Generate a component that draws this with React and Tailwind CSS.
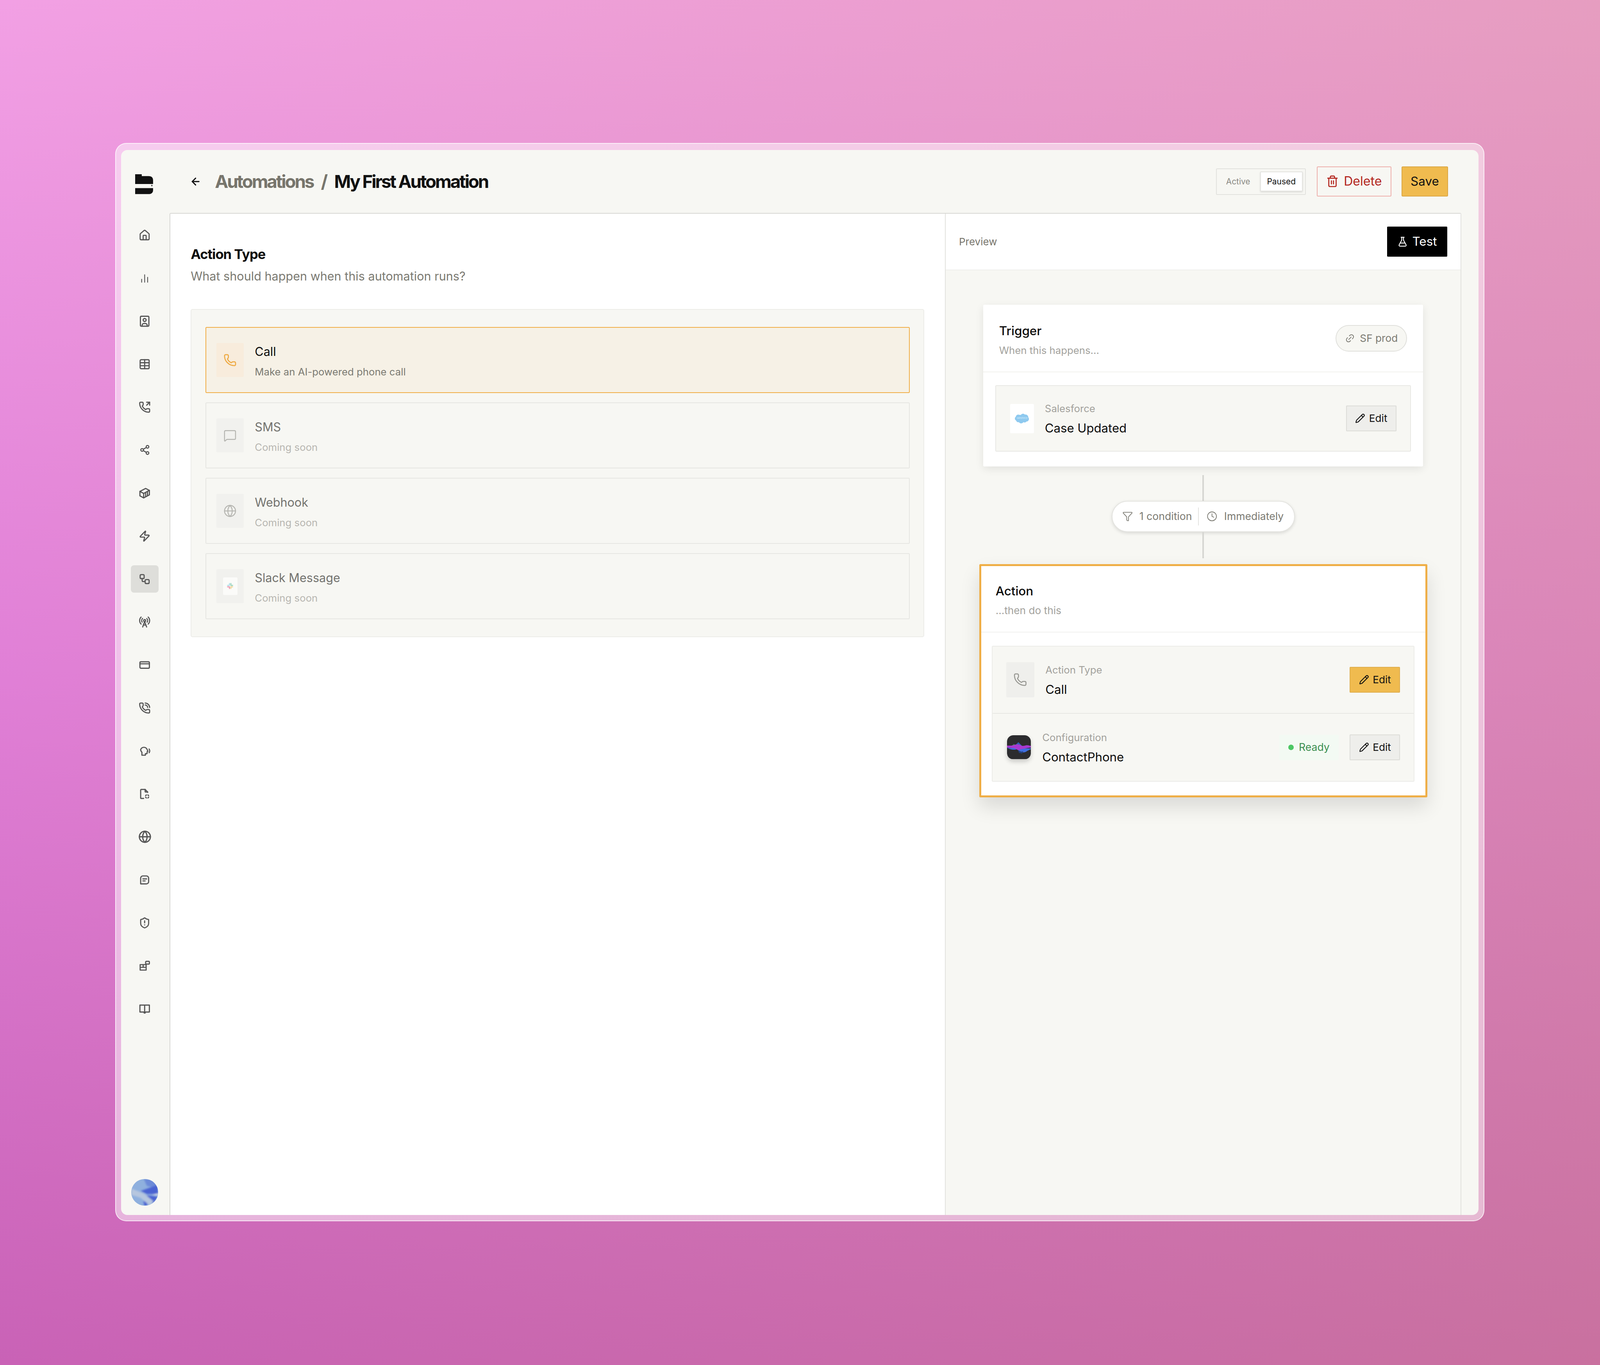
import {
  ArrowLeft,
  Clock,
  FlaskConical,
  Funnel,
  Globe,
  House,
  Link2,
  MessageSquare,
  Pencil,
  Phone,
  PhoneCall,
  PhoneOutgoing,
  RadioTower,
  Share2,
  ShieldAlert,
  Trash2,
  Workflow,
  Zap,
} from "lucide-react";

// the window is narrower than the screenshot, so widths are in vw and heights stay in px
const navIcon = "h-[0.747vw] w-[0.747vw]";

function Svg({ sw = 2.3, children }) {
  return (
    <svg
      className={navIcon}
      viewBox="0 0 24 24"
      fill="none"
      stroke="currentColor"
      strokeWidth={sw}
      strokeLinecap="round"
      strokeLinejoin="round"
    >
      {children}
    </svg>
  );
}

const BarsIcon = () => (
  <Svg sw={1.7}>
    <path d="M6 20v-6M12 20V5M18 20V10" />
  </Svg>
);
const ContactIcon = () => (
  <Svg>
    <rect x="3.5" y="2" width="17" height="20" rx="2" />
    <circle cx="12" cy="9.5" r="3" />
    <path d="M7 22v-2a3.5 3.5 0 0 1 3.5-3.5h3A3.5 3.5 0 0 1 17 20v2" />
  </Svg>
);
const TableIcon = () => (
  <Svg>
    <rect x="3" y="3" width="18" height="18" rx="2" />
    <path d="M3 9h18M3 15h18M12 3v18" />
  </Svg>
);
const CubeIcon = () => (
  <Svg>
    <path d="M2.5 8.5 14 2.5l7.5 4v9L10 21.5l-7.5-4z" />
    <path d="M2.5 8.5 10 12.5l11.5-6M10 12.5v9M14 10.5v8.5M17.7 8.5v8.5" />
  </Svg>
);
const CardIcon = () => (
  <Svg>
    <rect x="2.5" y="5.5" width="19" height="13" rx="2" />
    <path d="M2.5 9.5h19" />
  </Svg>
);
const SpeechIcon = () => (
  <Svg>
    <path d="M13.5 20.5v-3h2a1.5 1.5 0 0 0 1.5-1.5v-2.5l1.5-1-1.5-3.5A7 7 0 0 0 4 9c0 2.5 1 4 2.5 5.5v6z" />
    <path d="M21 8a7 7 0 0 1 0 7.5" />
  </Svg>
);
const FileDashedIcon = () => (
  <Svg>
    <path d="M10 21H5a1 1 0 0 1-1-1V4a1 1 0 0 1 1-1h8l5 5v1" />
    <path d="M13 3v4a1 1 0 0 0 1 1h4" />
    <path d="M14 15.5a3 3 0 0 1 1.5-1.5M18.5 14a3 3 0 0 1 1.5 1.5M20 18.5a3 3 0 0 1-1.5 1.5M15.5 20a3 3 0 0 1-1.5-1.5" />
  </Svg>
);
const NoteIcon = () => (
  <Svg>
    <path d="M4 8.5A4.5 4.5 0 0 1 8.5 4h7A4.5 4.5 0 0 1 20 8.5v7a4.5 4.5 0 0 1-4.5 4.5H4z" />
    <path d="M8.5 10h7.5M8.5 14h4.5" />
  </Svg>
);
const BlocksIcon = () => (
  <Svg>
    <path d="M3 9.5h12v11H3zM3 15h12M9 9.5V15" />
    <rect x="14" y="3" width="7.5" height="5.5" rx="1.5" />
  </Svg>
);
const BookIcon = () => (
  <Svg>
    <path d="M2.5 4.5h19v14H13v2h-2v-2H2.5zM12 4.5v14" />
  </Svg>
);

const navItems = [
  <House className={navIcon} strokeWidth={2.2} />,
  <BarsIcon />,
  <ContactIcon />,
  <TableIcon />,
  <PhoneOutgoing className={navIcon} strokeWidth={2.2} />,
  <Share2 className="h-[0.67vw] w-[0.67vw]" strokeWidth={2.3} />,
  <CubeIcon />,
  <Zap className={navIcon} strokeWidth={2.2} />,
  <Workflow className={navIcon} strokeWidth={2.2} />,
  <RadioTower className={navIcon} strokeWidth={2.2} />,
  <CardIcon />,
  <PhoneCall className={navIcon} strokeWidth={2.2} />,
  <SpeechIcon />,
  <FileDashedIcon />,
  <Globe className="h-[0.826vw] w-[0.826vw]" strokeWidth={2.2} />,
  <NoteIcon />,
  <ShieldAlert className={navIcon} strokeWidth={2.2} />,
  <BlocksIcon />,
  <BookIcon />,
];

function Logo() {
  return (
    <svg viewBox="0 0 57 63" className="mr-[0.1vw] h-auto w-[1.12vw]">
      <path d="M0 0h21v6h22c9 0 14 5 14 13v12H0z" fill="#111" />
      <path d="M0 44h57v7c0 7-5 12-12 12H0z" fill="#111" />
      <circle cx="53" cy="36" r="2.5" fill="#555" />
    </svg>
  );
}

function Avatar() {
  return (
    <svg viewBox="0 0 85 85" className="h-[1.67vw] w-[1.67vw] rounded-full">
      <defs>
        <filter id="soft">
          <feGaussianBlur stdDeviation="2.5" />
        </filter>
      </defs>
      <rect width="85" height="85" fill="#8fb0de" />
      <g filter="url(#soft)">
        <path d="M40 0h45v30L50 22z" fill="#6c8ad8" />
        <path d="M30 38 85 18v30H50z" fill="#4a62d2" />
        <path d="M50 52 85 56 70 78 52 60z" fill="#4a62d2" />
        <path d="M38 70 52 74 50 85 42 85z" fill="#4a62d2" />
        <path d="M0 30 40 46 70 70 60 85 30 60 0 50z" fill="#b6c6de" />
        <path d="M68 50 85 46v6z" fill="#dfe4e8" />
      </g>
    </svg>
  );
}

function SalesforceLogo() {
  return (
    <svg viewBox="0 0 46 33" className="h-auto w-[0.904vw]">
      <path
        d="M19 5a8 8 0 0 1 13-1 9 9 0 0 1 11 9 8 8 0 0 1-6 13 8 8 0 0 1-10 2 8 8 0 0 1-14 0 8 8 0 0 1-9-5 7 7 0 0 1-1-12 8 8 0 0 1 12-6z"
        fill="#8ec9ef"
      />
      <text x="23" y="18" textAnchor="middle" fill="#d8eefb" fontSize="7" fontFamily="Inter, sans-serif">
        salesforce
      </text>
    </svg>
  );
}

function SlackLogo() {
  return (
    <svg viewBox="0 0 20 20" fill="none" strokeWidth="3.4" strokeLinecap="round" opacity="0.55" className="h-[0.393vw] w-[0.393vw]">
      <path d="M8 2v5.5M2 8h4" stroke="#6ecadc" />
      <path d="M12.5 2v6M18 8h-3" stroke="#4fb68e" />
      <path d="M12.5 18v-5.5M18 12.5h-5" stroke="#e8b64a" />
      <path d="M8 18v-5.5M2 12.5h5" stroke="#de4a72" />
    </svg>
  );
}

function ContactPhoneLogo() {
  return (
    <svg viewBox="0 0 76 76" className="h-[1.494vw] w-[1.494vw] rounded-[16px] shadow-[0_6px_12px_rgba(0,0,0,0.18)]">
      <rect width="76" height="76" rx="18" fill="#2c2c2e" />
      <path d="M14 34l8-6 6 5z" fill="#3f8f57" />
      <path d="M26 32l10-10 12 12 10 4H30z" fill="#2f62b8" />
      <path d="M0 40c12 6 22 8 32 4 8 12 22 14 32 6l12-6v-2z" fill="#3f6fe0" />
      <path d="M34 46c8 6 12 8 18 4l-4 8-10-2z" fill="#24417f" />
      <path d="M0 33h14c8-1 12-4 20-4s10 5 16 5 10-3 16-2c4 0 7 2 10 2v5c-8 1-14 1-18 3-8 2-14 1-18 5-6 2-12-5-18-6-8-1-14-1-22-2z" fill="#a83ad0" />
    </svg>
  );
}

function Sidebar() {
  return (
    <aside className="flex w-[3.027vw] shrink-0 flex-col items-center pb-[24px] pr-[0.08vw] pt-[56px] text-[#555]">
      <div className="flex h-[63px] items-center">
        <Logo />
      </div>
      <div className="mt-[44px] flex flex-col">
        {navItems.map((icon, i) => (
          <div key={i} className="flex h-[110px] w-[1.73vw] items-center justify-center">
            <div className={"flex h-[1.73vw] w-[1.73vw] items-center justify-center rounded-[8px] " + (i === 8 ? "bg-[#dededa]" : "")}>
              {icon}
            </div>
          </div>
        ))}
      </div>
      <div className="mt-auto">
        <Avatar />
      </div>
    </aside>
  );
}

function Header() {
  return (
    <header className="flex h-[161px] shrink-0 items-center pl-[1.26vw] pr-[1.926vw]">
      <ArrowLeft strokeWidth={2.4} className="h-[0.72vw] w-[0.72vw] text-[#111]" />
      <div className="ml-[0.85vw] flex items-center text-[1.12vw] font-bold leading-none tracking-[-0.07em]">
        <span className="text-[#77756c]">Automations</span>
        <span className="ml-[0.472vw] text-[#77756c]">/</span>
        <span className="ml-[0.472vw] text-[#111]">My First Automation</span>
      </div>
      <div className="ml-auto flex items-center">
        <div className="flex h-[68px] w-[5.62vw] items-center rounded-[3px] border-2 border-[#e2e2de] pl-[0.59vw] text-[0.511vw]">
          <span className="text-[#8a8983]">Active</span>
          <span className="ml-[0.609vw] flex h-[51px] w-[2.673vw] items-center justify-center rounded-[2px] border-2 border-[#e4e4e0] bg-white text-[#111] shadow-[0_2px_4px_rgba(0,0,0,0.12)]">
            Paused
          </span>
        </div>
        <button className="ml-[0.688vw] flex h-[77px] w-[4.658vw] items-center justify-center gap-[0.314vw] rounded-[3px] border-2 border-[#eeb0ac] text-[0.785vw] text-[#b3261e]">
          <Trash2 strokeWidth={2} className="h-[0.786vw] w-[0.786vw]" />
          Delete
        </button>
        <button className="ml-[0.649vw] h-[77px] w-[2.889vw] rounded-[3px] border-2 border-[#dba745] bg-[#f0bb4f] text-[0.767vw] text-[#111]">
          Save
        </button>
      </div>
    </header>
  );
}

const optionIcon = "h-[0.825vw] w-[0.825vw]";

function ActionOption({ icon, title, sub, active }) {
  return (
    <div
      className={
        "flex h-[169px] items-center gap-[0.688vw] rounded-[3px] border-2 pl-[0.649vw] " +
        (active ? "border-[#f0ae48] bg-[#f6f1e6]" : "border-[#e6e6e2] bg-[#f7f7f3]")
      }
    >
      <div
        className={
          "flex h-[87px] w-[1.71vw] items-center justify-center rounded-[3px] " +
          (active ? "bg-[#f8ecdc] text-[#eeaa43]" : "bg-[#f1f1ee] text-[#b5b5b0]")
        }
      >
        {icon}
      </div>
      <div className="pt-[8px]">
        <div className={"text-[0.747vw] leading-[52px] " + (active ? "text-[#0c0c0c]" : "text-[#73736f]")}>{title}</div>
        <div className={"text-[0.629vw] leading-[52px] " + (active ? "text-[#7b7a72]" : "text-[#b7b6b1]")}>{sub}</div>
      </div>
    </div>
  );
}

function LeftPane() {
  return (
    <section className="w-[48.41vw] shrink-0 bg-white pl-[1.265vw] pr-[1.297vw] pt-[78px]">
      <h2 className="text-[0.845vw] font-bold leading-[50px] tracking-[-0.03em] text-[#0c0c0c]">Action Type</h2>
      <p className="mt-[7px] text-[0.747vw] leading-[50px] text-[#7b7a72]">What should happen when this automation runs?</p>
      <div className="mt-[59px] flex flex-col gap-[24px] rounded-[5px] border-2 border-[#ecece8] bg-[#f7f7f3] px-[0.865vw] py-[44px]">
        <ActionOption active title="Call" sub="Make an AI-powered phone call" icon={<Phone strokeWidth={1.9} className={optionIcon} />} />
        <ActionOption title="SMS" sub="Coming soon" icon={<MessageSquare strokeWidth={1.7} className={optionIcon} />} />
        <ActionOption title="Webhook" sub="Coming soon" icon={<Globe strokeWidth={1.7} className={optionIcon} />} />
        <ActionOption
          title="Slack Message"
          sub="Coming soon"
          icon={
            <span className="flex h-[45px] w-[0.904vw] items-center justify-center rounded-[3px] bg-[#fbfbf9]">
              <SlackLogo />
            </span>
          }
        />
      </div>
    </section>
  );
}

function EditButton({ primary }) {
  return (
    <button
      className={
        "flex h-[66px] w-[3.145vw] items-center justify-center gap-[0.236vw] rounded-[2px] border-2 text-[0.64vw] text-[#111] " +
        (primary ? "border-[#dfae4e] bg-[#f0bb4f]" : "border-[#dcdcd8] bg-[#eeeeeb]")
      }
    >
      <Pencil strokeWidth={2} className="h-[0.629vw] w-[0.629vw]" />
      Edit
    </button>
  );
}

function RowText({ label, value }) {
  return (
    <div>
      <div className="text-[0.629vw] leading-[50px] text-[#a2a19c]">{label}</div>
      <div className="text-[0.76vw] leading-[50px] text-[#0c0c0c]">{value}</div>
    </div>
  );
}

function PreviewPane() {
  return (
    <section className="flex min-w-0 flex-1 flex-col border-x-2 border-[#e2e2de] bg-[#f7f7f3]">
      <div className="flex h-[145px] shrink-0 items-center justify-between border-b-2 border-[#efefeb] bg-white pl-[0.825vw] pr-[0.845vw]">
        <span className="text-[0.635vw] text-[#77756c]">Preview</span>
        <button className="flex h-[77px] w-[3.754vw] items-center justify-center gap-[0.275vw] rounded-[2px] bg-black text-[0.767vw] text-white">
          <FlaskConical strokeWidth={2} className="h-[0.668vw] w-[0.668vw]" />
          Test
        </button>
      </div>

      <div className="flex flex-col items-center pt-[88px]">
        <div className="w-[27.476vw] rounded-[3px] bg-white pb-[38px] shadow-[0_6px_22px_rgba(0,0,0,0.09)]">
          <div className="flex h-[173px] items-center justify-between border-b-2 border-[#f1f1ee] pl-[0.983vw] pr-[1.002vw]">
            <div className="pt-[12px]">
              <div className="text-[0.767vw] font-medium leading-[50px] text-[#0c0c0c]">Trigger</div>
              <div className="text-[0.629vw] leading-[50px] text-[#a2a19c]">When this happens...</div>
            </div>
            <div className="flex h-[68px] w-[4.462vw] items-center justify-center gap-[0.314vw] rounded-full border-2 border-[#e0e0dc] bg-[#f7f7f3] text-[0.64vw] text-[#7b7a72]">
              <Link2 strokeWidth={1.8} className="h-[0.629vw] w-[0.629vw] -rotate-45" />
              SF prod
            </div>
          </div>
          <div className="mx-[0.747vw] mt-[33px] flex h-[170px] items-center justify-between rounded-[3px] border-2 border-[#e8e8e4] bg-[#f7f7f3] px-[0.865vw]">
            <div className="flex items-center gap-[0.688vw]">
              <div className="flex h-[75px] w-[1.494vw] items-center justify-center rounded-[3px] bg-white">
                <SalesforceLogo />
              </div>
              <RowText label="Salesforce" value="Case Updated" />
            </div>
            <EditButton />
          </div>
        </div>

        <div className="mt-[22px] h-[66px] w-[0.098vw] bg-[#d6d6d2]" />
        <div className="flex h-[80px] w-[11.458vw] items-center rounded-full border-2 border-[#e4e4e0] bg-white pl-[0.629vw] text-[0.65vw] text-[#7b7a72] shadow-[0_3px_8px_rgba(0,0,0,0.12)]">
          <Funnel strokeWidth={1.6} className="h-[0.668vw] w-[0.668vw]" />
          <span className="ml-[0.393vw]">1 condition</span>
          <span className="ml-[0.39vw] h-[46px] w-[2px] bg-[#e4e4e0]" />
          <Clock strokeWidth={1.6} className="ml-[0.472vw] h-[0.668vw] w-[0.668vw]" />
          <span className="ml-[0.432vw]">Immediately</span>
        </div>
        <div className="h-[67px] w-[0.098vw] bg-[#d6d6d2]" />

        <div className="mt-[15px] w-[28.007vw] rounded-[3px] border-[5px] border-[#efae46] bg-white pb-[35px] shadow-[0_24px_50px_rgba(0,0,0,0.12)]">
          <div className="h-[170px] border-b-2 border-[#f1f1ee] pl-[0.904vw] pt-[39px]">
            <div className="text-[0.767vw] font-medium leading-[50px] text-[#0c0c0c]">Action</div>
            <div className="text-[0.64vw] leading-[50px] text-[#a2a19c]">...then do this</div>
          </div>
          <div className="mx-[0.668vw] mt-[34px] rounded-[3px] border-2 border-[#ecece8] bg-[#f7f7f3]">
            <div className="flex h-[172px] items-center justify-between border-b-2 border-[#e8e8e4] pl-[0.865vw] pr-[0.86vw]">
              <div className="flex items-center gap-[0.688vw]">
                <div className="flex h-[90px] w-[1.749vw] items-center justify-center rounded-[3px] bg-[#efefec] text-[#969691]">
                  <Phone strokeWidth={1.7} className="h-[0.865vw] w-[0.865vw]" />
                </div>
                <RowText label="Action Type" value="Call" />
              </div>
              <EditButton primary />
            </div>
            <div className="flex h-[172px] items-center justify-between pl-[0.904vw] pr-[0.86vw]">
              <div className="flex items-center gap-[0.708vw]">
                <ContactPhoneLogo />
                <RowText label="Configuration" value="ContactPhone" />
              </div>
              <div className="flex items-center gap-[0.688vw]">
                <div className="flex h-[65px] w-[3.715vw] items-center justify-center gap-[0.314vw] rounded-[3px] bg-[#f3faf3] text-[0.65vw] text-[#3c8f50]">
                  <span className="h-[0.334vw] w-[0.334vw] rounded-full bg-[#4cc764]" />
                  Ready
                </div>
                <EditButton />
              </div>
            </div>
          </div>
        </div>
      </div>
    </section>
  );
}

export default function App() {
  return (
    <div className="h-[3494px] w-full overflow-hidden bg-[linear-gradient(to_right,rgba(200,150,100,0),rgba(200,150,100,0.28)),linear-gradient(to_bottom,#f2a0e4,#e07fd6_50%,#c962b6)] pl-[7.213vw] pt-[366px] font-['Inter',sans-serif]">
      <div className="h-[2760px] w-[85.57vw] rounded-[28px] border-2 border-[rgba(255,255,255,0.7)] bg-[rgba(255,255,255,0.5)] px-[0.315vw] pb-[14px] pt-[16px]">
        <div className="flex h-full w-full overflow-hidden rounded-[16px] bg-[#f7f7f3]">
          <Sidebar />
          <main className="flex min-w-0 flex-1 flex-col">
            <Header />
            <div className="mr-[1.081vw] flex min-h-0 flex-1 overflow-hidden rounded-t-[4px] border-l-2 border-t-2 border-[#d8d8d4]">
              <LeftPane />
              <PreviewPane />
            </div>
          </main>
        </div>
      </div>
    </div>
  );
}
